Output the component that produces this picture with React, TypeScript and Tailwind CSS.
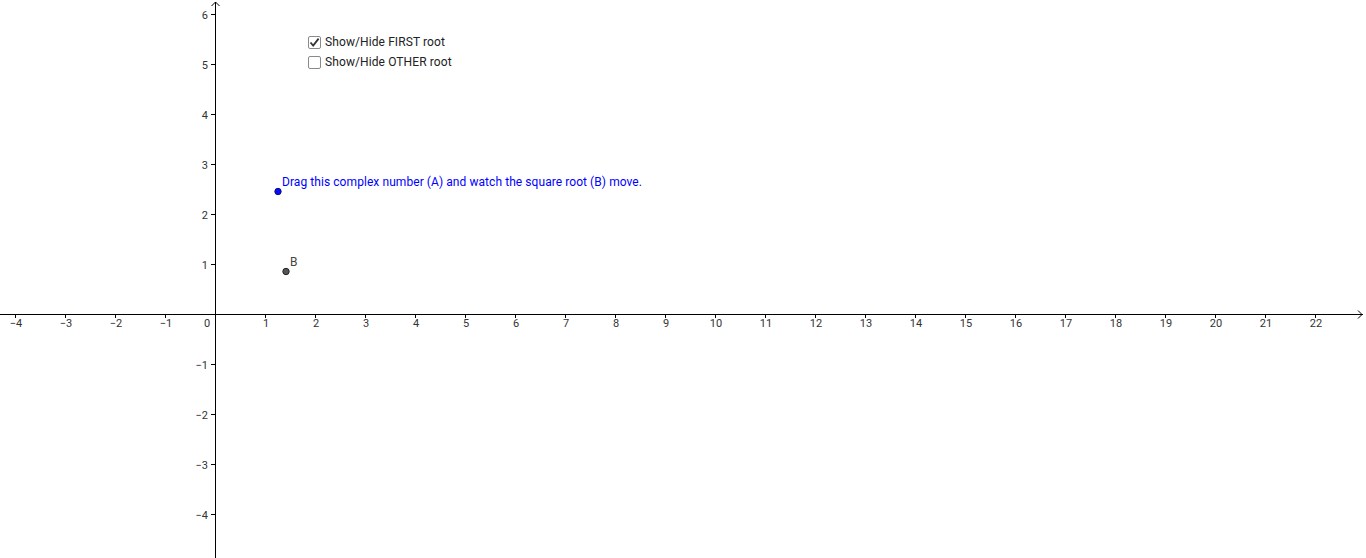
import React from 'react';

const W = 1366;
const H = 558;
const OX = 215;
const OY = 314;
const U = 50;

const xs = Array.from({ length: 27 }, (_, i) => i - 4);
const ys = [-4, -3, -2, -1, 1, 2, 3, 4, 5, 6];

const fmt = (n: number) => (n < 0 ? `\u2212${-n}` : `${n}`);

function Check({ checked, label }: { checked: boolean; label: string }) {
  return (
    <div className="flex items-center gap-[4px] h-[20px]">
      <div className="w-[13px] h-[13px] border border-[#8a8a8a] rounded-[2px] bg-white flex items-center justify-center">
        {checked && (
          <svg width="11" height="11" viewBox="0 0 11 11">
            <path d="M1.5 5.5 L4.2 8.6 L9.6 1.6" fill="none" stroke="#333" strokeWidth="1.8" />
          </svg>
        )}
      </div>
      <span className="text-[12px] text-[#222] leading-none tracking-[0.1px]">{label}</span>
    </div>
  );
}

export default function App() {
  return (
    <div className="relative w-[1366px] h-[558px] bg-white overflow-hidden" style={{ fontFamily: 'Roboto, "Liberation Sans", sans-serif' }}>
      <svg width={W} height={H} className="absolute left-0 top-0">
        {/* axes */}
        <line x1={0} y1={OY + 0.5} x2={W - 3} y2={OY + 0.5} stroke="#000" strokeWidth="1" />
        <line x1={OX + 0.5} y1={2} x2={OX + 0.5} y2={H} stroke="#000" strokeWidth="1" />
        <path d={`M${W - 8} ${OY - 3.5} L${W - 4} ${OY + 0.5} L${W - 8} ${OY + 4.5}`} fill="none" stroke="#000" strokeWidth="1" />
        <path d={`M${OX - 3.5} 6 L${OX + 0.5} 2 L${OX + 4.5} 6`} fill="none" stroke="#000" strokeWidth="1" />

        {xs.filter((k) => k !== 0).map((k) => (
          <g key={`x${k}`}>
            <line x1={OX + k * U + 0.5} y1={OY} x2={OX + k * U + 0.5} y2={OY + 4} stroke="#000" />
            <text x={OX + k * U + 1} y={OY + 13} fontSize="11" textAnchor="middle" fill="#333">
              {fmt(k)}
            </text>
          </g>
        ))}
        <text x={207} y={OY + 13} fontSize="11" textAnchor="middle" fill="#333">0</text>

        {ys.map((k) => (
          <g key={`y${k}`}>
            <line x1={OX - 4} y1={OY - k * U + 0.5} x2={OX} y2={OY - k * U + 0.5} stroke="#000" />
            <text x={OX - 7} y={OY - k * U + 4.5} fontSize="11" textAnchor="end" fill="#333">
              {fmt(k)}
            </text>
          </g>
        ))}

        {/* points */}
        <circle cx={278} cy={191.5} r={3.2} fill="#0a0aff" stroke="#101070" strokeWidth="1" />
        <circle cx={286} cy={271.5} r={3.2} fill="#555" stroke="#222" strokeWidth="1" />
        <text x={290} y={266} fontSize="12" fill="#444">B</text>
        <text x={282} y={186} fontSize="12" fill="#0000ff" letterSpacing="0.07">
          Drag this complex number (A) and watch the square root (B) move.
        </text>
      </svg>

      <div className="absolute left-[308px] top-[32px] flex flex-col">
        <Check checked label="Show/Hide FIRST root" />
        <Check checked={false} label="Show/Hide OTHER root" />
      </div>
    </div>
  );
}
